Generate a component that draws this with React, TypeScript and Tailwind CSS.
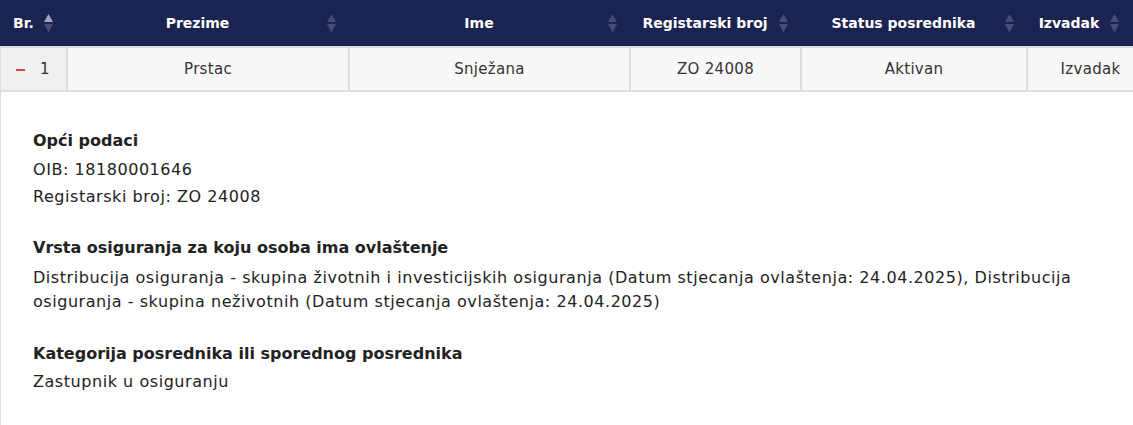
import React from 'react';

const font = { fontFamily: '"DejaVu Sans", sans-serif' };

// strelice za sortiranje u zaglavlju
function SortIcon({ up = false }: { up?: boolean }) {
    return (
        <svg width="9" height="19" viewBox="0 0 9 19" className="shrink-0">
            <path d="M4.5 0 L9 8 L0 8 Z" fill={up ? '#a3a7bb' : '#454d74'} />
            <path d="M0 10 L9 10 L4.5 18.5 Z" fill="#454d74" />
        </svg>
    );
}

type Col = { label: string; value: string; width: string; cell?: string };

const cols: Col[] = [
    { label: 'Prezime', value: 'Prstac', width: 'w-[282px]' },
    { label: 'Ime', value: 'Snježana', width: 'w-[281px]' },
    { label: 'Registarski broj', value: 'ZO 24008', width: 'w-[171px]' },
    { label: 'Status posrednika', value: 'Aktivan', width: 'w-[226px]' },
    { label: 'Izvadak', value: 'Izvadak', width: 'w-[105px]', cell: 'pl-[20px]' },
];

function App() {
    return (
        <div className="w-[1133px] h-[425px] overflow-hidden bg-white text-[#222]" style={font}>
            {/* zaglavlje tablice */}
            <div className="flex h-[46px] bg-[#1b2350] text-white text-[14px] font-bold">
                <div className="w-[68px] flex items-center pl-[13px] gap-[10px]">
                    Br.
                    <SortIcon up />
                </div>
                {cols.map((c) => (
                    <div key={c.label} className={`${c.width} flex items-center pr-[14px]`}>
                        <span className="flex-1 text-center">{c.label}</span>
                        <SortIcon />
                    </div>
                ))}
            </div>

            {/* red */}
            <div className="flex h-[46px] border-t-2 border-b-2 border-[#dddddd] text-[15px] tracking-[0.3px] text-[#333]">
                <div className="w-[68px] flex items-center bg-[#f0f0f0] border-l border-r-2 border-[#dddddd] pl-[15px]">
                    <span className="w-[9px] h-[2px] bg-[#d9463c] mr-[15px] mt-[2px]" />
                    <span>1</span>
                </div>
                {cols.map((c, i) => (
                    <div
                        key={c.label}
                        className={`${c.width} ${c.cell ?? ''} flex items-center justify-center bg-[#f8f8f8] ${i < cols.length - 1 ? 'border-r-2 border-[#dddddd]' : ''}`}>
                        {c.value}
                    </div>
                ))}
            </div>

            {/* detalji */}
            <div className="border-l border-[#dddddd] pl-8 pr-8 pt-[37px] h-[333px] text-[16px]">
                <div>
                    <h3 className="font-bold leading-6 mb-[3px]">Opći podaci</h3>
                    <p className="leading-[27px] tracking-[0.55px]">OIB: 18180001646</p>
                    <p className="leading-[27px] tracking-[0.55px]">Registarski broj: ZO 24008</p>
                </div>
                <div className="mt-[26px]">
                    <h3 className="font-bold leading-6 mb-[6px]">Vrsta osiguranja za koju osoba ima ovlaštenje</h3>
                    <p className="leading-6 tracking-[0.55px]">
                        Distribucija osiguranja - skupina životnih i investicijskih osiguranja (Datum stjecanja
                        ovlaštenja: 24.04.2025), Distribucija osiguranja - skupina neživotnih (Datum stjecanja
                        ovlaštenja: 24.04.2025)
                    </p>
                </div>
                <div className="mt-[28px]">
                    <h3 className="font-bold leading-6 mb-[4px]">Kategorija posrednika ili sporednog posrednika</h3>
                    <p className="leading-6 tracking-[0.55px]">Zastupnik u osiguranju</p>
                </div>
            </div>
        </div>
    );
}

export default App;
